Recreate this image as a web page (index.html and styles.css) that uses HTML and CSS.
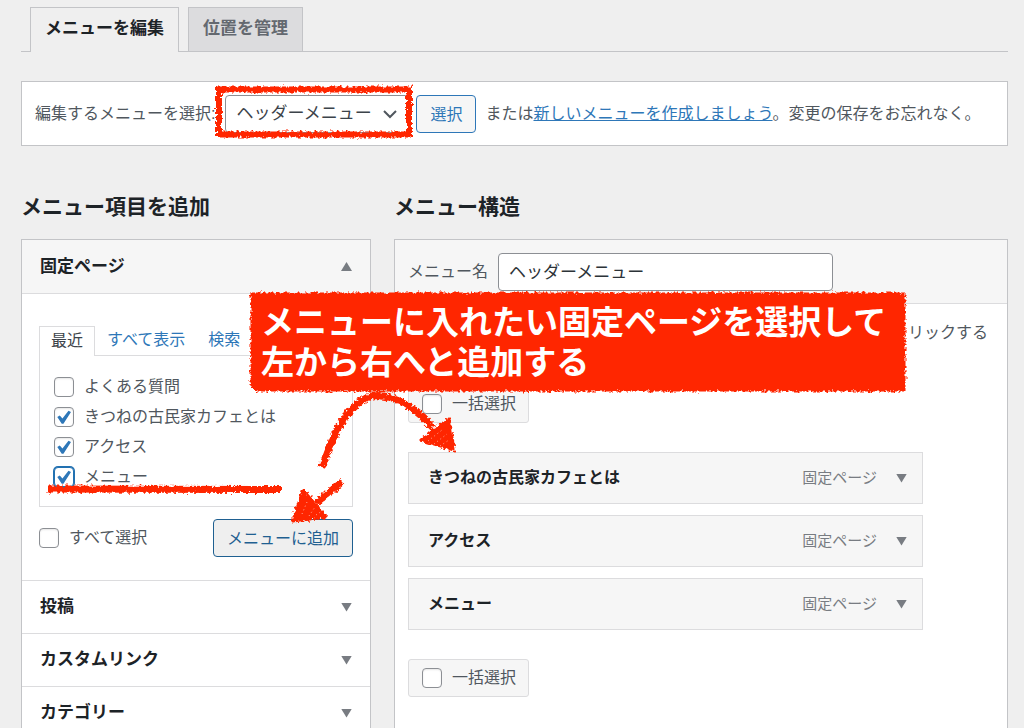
FILE: index.html
```html
<!DOCTYPE html>
<html lang="ja">
<head>
<meta charset="utf-8">
<title>メニュー</title>
<link rel="stylesheet" href="styles.css">
</head>
<body>
<div class="page">
  <nav class="tabs">
    <a class="tab tab-active" href="#edit">メニューを編集</a>
    <a class="tab" href="#locations">位置を管理</a>
  </nav>

  <form class="picker">
    <label class="picker-label" for="menu-select">編集するメニューを選択:</label>
    <span class="select-wrap">
      <select id="menu-select"><option>ヘッダーメニュー</option></select>
      <svg class="chevron" viewBox="0 0 14 10" aria-hidden="true"><path d="M1 2l6 6L13 2" fill="none" stroke="#50575e" stroke-width="2"/></svg>
    </span>
    <button class="button" type="button">選択</button>
    <span class="picker-note">または<a href="#new">新しいメニューを作成しましょう</a>。変更の保存をお忘れなく。</span>
  </form>

  <div class="columns">
    <section>
      <h2 class="title">メニュー項目を追加</h2>
      <div class="panel">
        <h3 class="accordion accordion-open">固定ページ<span class="triangle triangle-up"></span></h3>
        <div class="accordion-body">
          <div class="subtabs">
            <a class="subtab subtab-active" href="#recent">最近</a>
            <a class="subtab" href="#all">すべて表示</a>
            <a class="subtab" href="#search">検索</a>
          </div>
          <div class="checklist">
            <label class="check"><input type="checkbox">よくある質問</label>
            <label class="check"><input type="checkbox" checked>きつねの古民家カフェとは</label>
            <label class="check"><input type="checkbox" checked>アクセス</label>
            <label class="check"><input class="focused" type="checkbox" checked>メニュー</label>
          </div>
          <div class="actions">
            <label class="check"><input type="checkbox">すべて選択</label>
            <button class="button button-active" type="button">メニューに追加</button>
          </div>
        </div>
        <h3 class="accordion">投稿<span class="triangle"></span></h3>
        <h3 class="accordion">カスタムリンク<span class="triangle"></span></h3>
        <h3 class="accordion">カテゴリー<span class="triangle"></span></h3>
      </div>
    </section>

    <section class="structure">
      <h2 class="title">メニュー構造</h2>
      <div class="panel panel-fill">
        <div class="name-row">
          <label for="menu-name">メニュー名</label>
          <input class="name-input" id="menu-name" type="text" value="ヘッダーメニュー">
        </div>
        <div class="structure-body">
          <p class="hint">リックする</p>
          <label class="bulk"><input type="checkbox">一括選択</label>
          <ul class="items">
            <li class="item"><strong>きつねの古民家カフェとは</strong><span class="kind">固定ページ</span><span class="triangle"></span></li>
            <li class="item"><strong>アクセス</strong><span class="kind">固定ページ</span><span class="triangle"></span></li>
            <li class="item"><strong>メニュー</strong><span class="kind">固定ページ</span><span class="triangle"></span></li>
          </ul>
          <label class="bulk"><input type="checkbox">一括選択</label>
        </div>
      </div>
    </section>
  </div>

  <svg class="marks" viewBox="0 0 1024 728" aria-hidden="true">
    <defs>
      <filter id="rough" filterUnits="userSpaceOnUse" x="0" y="0" width="1024" height="728">
        <feTurbulence type="fractalNoise" baseFrequency="0.350" numOctaves="2" seed="4"/>
        <feDisplacementMap in="SourceGraphic" scale="6" xChannelSelector="R" yChannelSelector="G"/>
      </filter>
    </defs>
    <g filter="url(#rough)" fill="none" stroke="#ff2600" stroke-width="6">
      <path d="M216 89.500H412M409 87V135M412 134.500H219M219 87V135"/>
      <path d="M48 489L282 489.500" stroke-width="7"/>
      <path d="M322 467C335 428 352 396 378 395.500C400 397 417 410 433 428" stroke-width="7"/>
      <path d="M342 482L316 503" stroke-width="7"/>
      <path d="M449 419L421 440L454 450ZM303 490L293 521L326 517Z" fill="#ff2600" stroke-width="3" stroke-linejoin="round"/>
      <path d="M251 293H905V391H256L251 386Z" fill="#ff2600" stroke-width="1"/>
    </g>
    <path d="M428 441L442 430M434 444L447 434M440 446L449 440M302 514L307 502M309 516L315 507M316 515L322 511" fill="none" stroke="#fff" stroke-width="1" stroke-dasharray="1 3" opacity="0.600"/>
  </svg>
  <p class="banner">メニューに入れたい固定ページを選択して<br>左から右へと追加する</p>
</div>
</body>
</html>
```

FILE: styles.css
```css
* { box-sizing: border-box; }

body {
  margin: 0;
  background: #efefef;
  color: #50575e;
  font: 16px/24px "Liberation Sans", "Noto Sans CJK JP", sans-serif;
}

h2, h3, p, ul { margin: 0; padding: 0; }
input, button, select { font-family: inherit; margin: 0; }
a { color: #2e77b8; }

.page {
  position: relative;
  display: flex;
  flex-direction: column;
  height: 100vh;
  overflow: hidden;
  padding: 7px 16px 0 21px;
}

.tabs {
  display: flex;
  flex-shrink: 0;
  gap: 9px;
  padding-left: 9px;
  border-bottom: 1px solid #c3c4c7;
}
.tab {
  padding: 9px 14px 10px;
  border: 1px solid #c3c4c7;
  border-bottom: 0;
  background: #dcdcde;
  color: #646970;
  font-size: 17px;
  font-weight: 700;
  line-height: 24px;
  text-decoration: none;
}
.tab-active {
  margin-bottom: -1px;
  padding-bottom: 11px;
  background: #efefef;
  color: #1d2327;
}

.picker {
  display: flex;
  flex-shrink: 0;
  align-items: center;
  height: 65px;
  margin-top: 29px;
  padding: 0 13px;
  border: 1px solid #c3c4c7;
  background: #fff;
  white-space: nowrap;
}
.picker-label { margin-right: 10px; }
.select-wrap { position: relative; margin-right: 7px; }
.select-wrap select {
  appearance: none;
  display: block;
  width: 184px;
  height: 38px;
  padding: 0 10px;
  border: 1px solid #8c8f94;
  border-radius: 4px;
  background: #fff;
  color: #3c434a;
  font-size: 17px;
}
.chevron { position: absolute; right: 12px; top: 14px; width: 14px; height: 10px; }
.picker-note { margin-left: 9px; }

.button {
  height: 38px;
  padding: 0 13px 2px;
  border: 1px solid #2e77b8;
  border-radius: 4px;
  background: #f6f6f6;
  color: #2e77b8;
  font-size: 16px;
}
.button-active { background: #efefef; border-color: #1f6091; color: #1f6091; }

.columns {
  display: grid;
  flex: 1;
  grid-template-columns: 350px 1fr;
  gap: 23px;
  margin-top: 46px;
}
.title {
  margin-bottom: 17px;
  color: #1d2327;
  font-size: 21px;
  line-height: 30px;
}
.panel { border: 1px solid #c3c4c7; background: #fff; }
.structure { display: flex; flex-direction: column; }
.panel-fill { flex: 1; }

.accordion {
  display: flex;
  align-items: center;
  justify-content: space-between;
  height: 53px;
  padding: 0 18px;
  border-top: 1px solid #dcdcde;
  color: #1d2327;
  font-size: 17px;
}
.accordion-open {
  height: 54px;
  border-top: 0;
  border-bottom: 1px solid #dcdcde;
  background: #f6f6f6;
}
.triangle {
  width: 11px;
  height: 9px;
  background: #787c82;
  clip-path: polygon(0 0, 100% 0, 50% 100%);
}
.triangle-up { clip-path: polygon(0 100%, 100% 100%, 50% 0); }

.accordion-body { padding: 32px 17px 23px; }
.subtabs { display: flex; }
.subtab { height: 29px; margin-right: 23px; line-height: 28px; text-decoration: none; }
.subtab-active {
  height: 30px;
  margin: 0 12px -1px 0;
  padding: 0 11px;
  border: 1px solid #dcdcde;
  border-bottom: 0;
  background: #fff;
  color: #3c434a;
}
.checklist {
  display: grid;
  align-content: start;
  gap: 6px;
  height: 152px;
  padding: 19px 14px;
  border: 1px solid #dcdcde;
}
.check { display: flex; align-items: center; gap: 10px; }
.actions {
  display: flex;
  align-items: center;
  justify-content: space-between;
  margin-top: 12px;
}

input[type="checkbox"] {
  appearance: none;
  flex: none;
  width: 20px;
  height: 20px;
  border: 1px solid #8c8f94;
  border-radius: 4px;
  background: #fff;
  box-shadow: inset 0 1px 2px rgb(0 0 0 / 10%);
}
input[type="checkbox"]:checked::before {
  content: "";
  display: block;
  width: 14px;
  height: 14px;
  margin: 2px;
  background: #2e77b8;
  clip-path: polygon(2% 50%, 20% 40%, 39% 60%, 82% 6%, 100% 14%, 46% 98%, 34% 98%);
}
input.focused { border-color: #2271b1; box-shadow: 0 0 0 1px #2271b1; }

.name-row {
  display: flex;
  align-items: center;
  gap: 10px;
  height: 64px;
  padding: 0 13px;
  border-bottom: 1px solid #dcdcde;
  background: #f6f6f6;
}
.name-input {
  width: 335px;
  height: 38px;
  padding: 0 10px 3px;
  border: 1px solid #8c8f94;
  border-radius: 4px;
  background: #fff;
  color: #2c3338;
  font-size: 17px;
}
.structure-body { padding: 17px 13px; }
.hint { margin-bottom: 40px; padding-right: 6px; text-align: right; }
.bulk {
  display: inline-flex;
  align-items: center;
  gap: 10px;
  height: 38px;
  padding: 0 12px 0 13px;
  border: 1px solid #dcdcde;
  border-radius: 3px;
  background: #f6f6f6;
  vertical-align: top;
}
.items {
  display: grid;
  gap: 11px;
  margin: 29px 71px 29px 0;
  list-style: none;
}
.item {
  display: flex;
  align-items: center;
  height: 52px;
  padding: 0 15px 0 19px;
  border: 1px solid #dcdcde;
  background: #f6f6f6;
}
.item strong { flex: 1; color: #1d2327; }
.kind { margin-right: 19px; color: #787c82; font-size: 15px; }

.marks {
  position: absolute;
  left: 0;
  top: 0;
  width: 1024px;
  height: 728px;
  pointer-events: none;
}
.banner {
  position: absolute;
  left: 261px;
  top: 303px;
  color: #fff;
  font-size: 33px;
  font-weight: 700;
  line-height: 40px;
  white-space: nowrap;
}
```
